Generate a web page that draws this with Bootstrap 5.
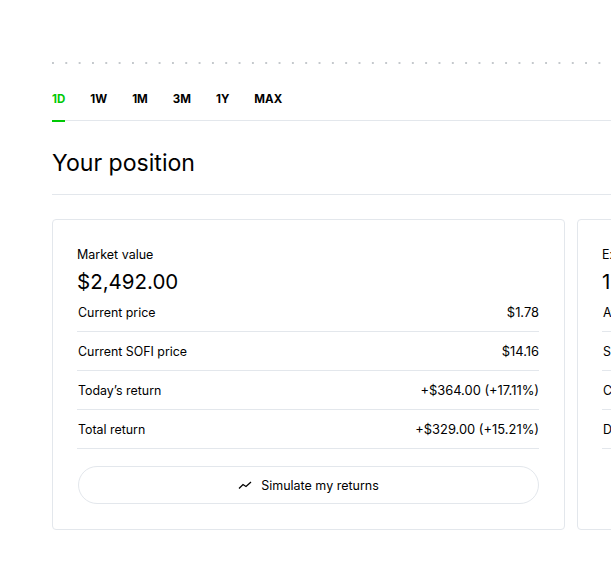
<!DOCTYPE html>
<html lang="en">
<head>
  <meta charset="UTF-8">
  <title>Your position</title>
  <meta name="viewport" content="width=device-width, initial-scale=1">
  <link href="https://cdn.jsdelivr.net/npm/bootstrap@5.3.0/dist/css/bootstrap.min.css" rel="stylesheet">
  <script src="https://cdn.jsdelivr.net/npm/bootstrap@5.3.0/dist/js/bootstrap.bundle.min.js"></script>
  <style>
    html, body { height: 100%; overflow: hidden; }
    body {
      font-family: Inter, "Liberation Sans", sans-serif;
      color: #000;
      background: #fff;
      font-size: 13px;
    }
    .page-wrap { padding: 62px 0 0 52px; width: 100%; }
    .dot-rule {
      height: 2px;
      background-image: radial-gradient(circle at 1px 1px, #c4c8cc 0.9px, transparent 1px);
      background-size: 13.33px 2px;
      background-repeat: repeat-x;
    }
    .range-tabs { height: 57px; border-bottom: 1px solid #e3e7ec; gap: 25px; }
    .range-tab {
      font-size: 11.5px; font-weight: 700; color: #000; text-decoration: none;
      padding-top: 27px; height: 58px; line-height: 16px; display: block;
    }
    .range-tab.on { color: #00c805; border-bottom: 2px solid #00c805; }
    .pos-title {
      font-size: 23.1px; font-weight: 400; line-height: 32px; margin: 0;
      padding: 26px 0 15px; border-bottom: 1px solid #e3e7ec;
    }
    .pos-cards { gap: 12px; margin-top: 24px; }
    .pos-card {
      flex: 0 0 513px; height: 311px; border: 1px solid #e3e7ec; border-radius: 4px;
      padding: 27px 25px 0 24px;
    }
    .pos-label { line-height: 16px; font-size: 12.5px; }
    .pos-big { font-size: 20.5px; line-height: 22px; margin-top: 8px; }
    .pos-row {
      height: 39px; border-bottom: 1px solid #e3e7ec; padding: 2px 0 0 1px;
      font-size: 12.4px;
    }
    .pos-val { font-size: 12.9px; }
    .sim-btn {
      margin: 17px 0 0 1px; height: 38px; width: 461px; padding-top: 3px;
      border: 1px solid #e3e7ec; border-radius: 19px; background: #fff;
      font-size: 12.5px; color: #000; gap: 9px;
    }
  </style>
</head>
<body>
  <div class="page-wrap">
    <div class="dot-rule"></div>
    <div class="range-tabs d-flex">
      <a class="range-tab on" href="#">1D</a>
      <a class="range-tab" href="#">1W</a>
      <a class="range-tab" href="#">1M</a>
      <a class="range-tab" href="#">3M</a>
      <a class="range-tab" href="#">1Y</a>
      <a class="range-tab" href="#">MAX</a>
    </div>
    <h2 class="pos-title">Your position</h2>
    <div class="pos-cards d-flex">
      <div class="pos-card">
        <div class="pos-label">Market value</div>
        <div class="pos-big">$2,492.00</div>
        <div class="pos-row d-flex justify-content-between align-items-center"><span>Current price</span><span class="pos-val">$1.78</span></div>
        <div class="pos-row d-flex justify-content-between align-items-center"><span>Current SOFI price</span><span class="pos-val">$14.16</span></div>
        <div class="pos-row d-flex justify-content-between align-items-center"><span>Today’s return</span><span class="pos-val">+$364.00 (+17.11%)</span></div>
        <div class="pos-row d-flex justify-content-between align-items-center"><span>Total return</span><span class="pos-val">+$329.00 (+15.21%)</span></div>
        <button class="sim-btn d-flex align-items-center justify-content-center" type="button">
          <svg width="14" height="10" viewBox="0 0 14 10" fill="none" stroke="#000" stroke-width="1.3"><path d="M1 7.5 L5 3.5 L8 5.5 L13 1"/></svg>
          <span>Simulate my returns</span>
        </button>
      </div>
      <div class="pos-card">
        <div class="pos-label">Exposure</div>
        <div class="pos-big">1,400</div>
        <div class="pos-row d-flex justify-content-between align-items-center"><span>Average cost</span><span class="pos-val">$1.54</span></div>
        <div class="pos-row d-flex justify-content-between align-items-center"><span>Shares</span><span class="pos-val">14</span></div>
        <div class="pos-row d-flex justify-content-between align-items-center"><span>Cost</span><span class="pos-val">$2,163.00</span></div>
        <div class="pos-row d-flex justify-content-between align-items-center"><span>Date</span><span class="pos-val">Jan 17</span></div>
      </div>
    </div>
  </div>
</body>
</html>
